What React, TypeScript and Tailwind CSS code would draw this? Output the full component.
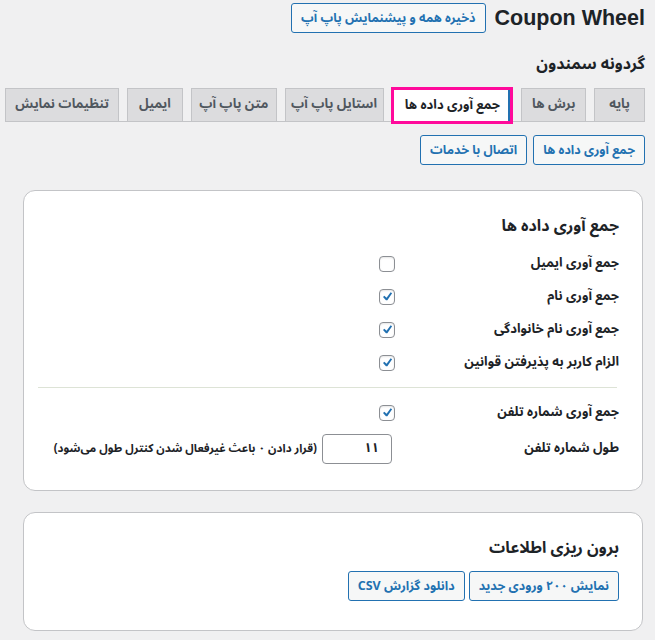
import React from "react";

const FA = '"Noto Sans Arabic", "Vazirmatn", "DejaVu Sans", sans-serif';

function Check({ checked }: { checked: boolean }) {
  return (
    <span className="inline-flex h-[16px] w-[16px] items-center justify-center rounded-[4px] border border-[#8c8f94] bg-white shadow-[inset_0_1px_2px_rgba(0,0,0,0.1)]">
      {checked && (
        <svg width="17" height="17" viewBox="0 0 20 20">
          <path d="M15.2 3.8l2.1 1.4-6.8 10H8.5L4.3 10.6l1.9-1.8 3.2 3z" fill="#2271b1" />
        </svg>
      )}
    </span>
  );
}

function Btn({ children }: { children: React.ReactNode }) {
  return (
    <button className="h-[30px] whitespace-nowrap rounded-[3px] border border-[#2271b1] bg-[#f6f7f7] px-[9px] text-[12.5px] font-bold text-[#2271b1]" style={{ fontFamily: FA }}>
      {children}
    </button>
  );
}

const tabs: [string, number][] = [
  ["پایه", 51],
  ["برش ها", 65],
  ["جمع آوری داده ها", 122],
  ["استایل پاپ آپ", 99],
  ["متن پاپ آپ", 86],
  ["ایمیل", 56],
  ["تنظیمات نمایش", 114],
];

function Row({ label, checked }: { label: string; checked: boolean }) {
  return (
    <div className="flex h-[33px] items-center">
      <div className="w-[224px] whitespace-nowrap text-[13px] font-bold text-[#1d2327]">{label}</div>
      <Check checked={checked} />
    </div>
  );
}

export default function App() {
  return (
    <div dir="rtl" className="min-h-[640px] bg-[#f0f0f1] pr-[10px] pl-[5px] pt-[3px] text-[#1d2327]" style={{ fontFamily: FA }}>
      <div className="flex items-center gap-[9px]">
        <h1 className="whitespace-nowrap text-[21.5px] font-bold leading-[30px] text-[#1d2327]" style={{ fontFamily: '"Liberation Sans", Arial, sans-serif' }}>
          Coupon Wheel
        </h1>
        <Btn>ذخیره همه و پیشنمایش پاپ آپ</Btn>
      </div>
      <h2 className="mt-[19px] whitespace-nowrap text-[16px] font-bold leading-[24px]">گردونه سمندون</h2>
      <div className="mt-[11px] flex items-end justify-between border-b border-[#c3c4c7]">
        {tabs.map(([t, w], i) =>
          i === 2 ? (
            <div key={t} style={{ width: w }} className="-mb-[3px] flex h-[37px] shrink-0 items-center justify-center whitespace-nowrap border-[3px] border-[#ff0a9b] bg-white text-[13px] font-bold text-[#1d2327] shadow-[inset_-2px_0_0_#2271b1]">
              {t}
            </div>
          ) : (
            <div key={t} style={{ width: w }} className="flex h-[33px] shrink-0 items-center justify-center whitespace-nowrap border border-b-0 border-[#c3c4c7] bg-[#dcdcde] text-[13px] font-bold text-[#50575e]">
              {t}
            </div>
          )
        )}
      </div>
      <div className="mt-[13px] flex gap-[6px]">
        <Btn>جمع آوری داده ها</Btn>
        <Btn>اتصال با خدمات</Btn>
      </div>
      <div className="mr-[2px] ml-[18px] mt-[25px] rounded-[12px] border border-[#c3c4c7] bg-white px-[23px] pt-[22px] pb-[24px]">
        <h3 className="whitespace-nowrap text-[16px] font-bold leading-[26px]">جمع آوری داده ها</h3>
        <div className="mt-[8px]">
          <Row label="جمع آوری ایمیل" checked={false} />
          <Row label="جمع آوری نام" checked={true} />
          <Row label="جمع آوری نام خانوادگی" checked={true} />
          <Row label="الزام کاربر به پذیرفتن قوانین" checked={true} />
        </div>
        <div className="my-[8px] -ml-[9px] mr-[2px] h-px bg-[#dde3d6]" />
        <Row label="جمع آوری شماره تلفن" checked={true} />
        <div className="mt-[3px] flex h-[34px] items-center">
          <div className="w-[227px] whitespace-nowrap text-[13px] font-bold">طول شماره تلفن</div>
          <div className="flex h-[30px] w-[70px] shrink-0 items-center rounded-[4px] border border-[#8c8f94] bg-white px-[12px] text-[13px] font-bold">۱۱</div>
          <div className="mr-[5px] whitespace-nowrap text-[11.5px] font-bold">(قرار دادن ۰ باعث غیرفعال شدن کنترل طول می‌شود)</div>
        </div>
      </div>
      <div className="mr-[2px] ml-[18px] mt-[21px] rounded-[12px] border border-[#c3c4c7] bg-white px-[23px] pt-[22px] pb-[29px]">
        <h3 className="whitespace-nowrap text-[16px] font-bold leading-[26px]">برون ریزی اطلاعات</h3>
        <div className="mt-[10px] flex gap-[4px]">
          <Btn>نمایش ۲۰۰ ورودی جدید</Btn>
          <Btn>دانلود گزارش CSV</Btn>
        </div>
      </div>
    </div>
  );
}
